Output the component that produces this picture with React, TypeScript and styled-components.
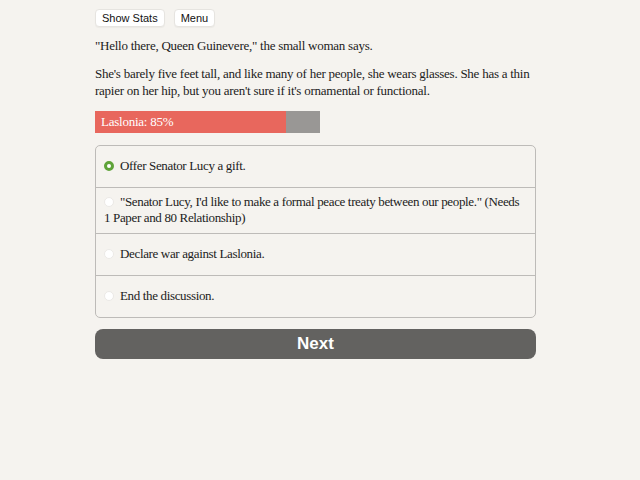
import React, { useState } from 'react';
import styled, { createGlobalStyle } from 'styled-components';

const GlobalStyle = createGlobalStyle`
	html, body {
		margin: 0;
		padding: 0;
		background: #f5f3ef;
	}
	body {
		font-family: 'Liberation Serif', 'DejaVu Serif', serif;
		color: #1c1c1c;
	}
`;

const Page = styled.div`
	width: 441px;
	margin-left: 95px;
	padding-top: 9px;
	letter-spacing: -0.25px;
`;

const Toolbar = styled.div`
	display: flex;
	gap: 9px;
`;

const ToolButton = styled.button`
	font-family: 'Liberation Sans', Arial, sans-serif;
	font-size: 11px;
	letter-spacing: 0;
	color: #111;
	background: #fff;
	border: 1px solid #e6e4e0;
	border-radius: 4px;
	height: 18px;
	padding: 0 6px;
	line-height: 16px;
	box-shadow: 0 1px 1px rgba(0, 0, 0, 0.04);
`;

const Para = styled.p`
	font-size: 13px;
	line-height: 17px;
	margin: 10px 0 0;
	& + & {
		margin-top: 11px;
	}
`;

const Bar = styled.div`
	margin-top: 12px;
	width: 225px;
	height: 22px;
	background: #999795;
`;

const BarFill = styled.div`
	height: 100%;
	background: #e8675d;
	color: #fff;
	font-size: 13px;
	line-height: 22px;
	padding-left: 6px;
	box-sizing: border-box;
	white-space: nowrap;
`;

const ChoiceList = styled.div`
	margin-top: 12px;
	border: 1px solid #bdbbb8;
	border-radius: 5px;
	overflow: hidden;
`;

const ChoiceRow = styled.label`
	display: flex;
	align-items: center;
	box-sizing: border-box;
	min-height: 41px;
	padding: 6px 14px 7px 8px;
	font-size: 13px;
	line-height: 16px;
	letter-spacing: -0.35px;
	cursor: pointer;
	& + & {
		border-top: 1px solid #bdbbb8;
		min-height: 42px;
	}
`;

const Radio = styled.span<{ $checked: boolean }>`
	display: inline-block;
	vertical-align: -1px;
	width: 10px;
	height: 10px;
	margin-right: 6px;
	border-radius: 50%;
	box-sizing: border-box;
	background: #fff;
	border: ${(p) => (p.$checked ? '3px solid #5fa339' : '1px solid #ebe9e6')};
`;

const NextButton = styled.button`
	display: block;
	width: 100%;
	margin-top: 11px;
	height: 30px;
	border: none;
	border-radius: 8px;
	background: #636260;
	color: #fff;
	font-family: 'Liberation Sans', Arial, sans-serif;
	font-weight: bold;
	font-size: 17px;
`;

const choices = [
	'Offer Senator Lucy a gift.',
	'"Senator Lucy, I\'d like to make a formal peace treaty between our people." (Needs 1 Paper and 80 Relationship)',
	'Declare war against Laslonia.',
	'End the discussion.',
];

const App: React.FC = () => {
	const [selected, setSelected] = useState(0);
	const relation = 85;

	return (
		<>
			<GlobalStyle />
			<Page>
				<Toolbar>
					<ToolButton>Show Stats</ToolButton>
					<ToolButton>Menu</ToolButton>
				</Toolbar>
				<Para>"Hello there, Queen Guinevere," the small woman says.</Para>
				<Para>
					She's barely five feet tall, and like many of her people, she wears
					glasses. She has a thin rapier on her hip, but you aren't sure if it's
					ornamental or functional.
				</Para>
				<Bar>
					<BarFill style={{ width: `${relation}%` }}>Laslonia: {relation}%</BarFill>
				</Bar>
				<ChoiceList>
					{choices.map((text, i) => (
						<ChoiceRow key={i} onClick={() => setSelected(i)}>
							<span>
								<Radio $checked={selected === i} />
								{text}
							</span>
						</ChoiceRow>
					))}
				</ChoiceList>
				<NextButton>Next</NextButton>
			</Page>
		</>
	);
};

export default App;
